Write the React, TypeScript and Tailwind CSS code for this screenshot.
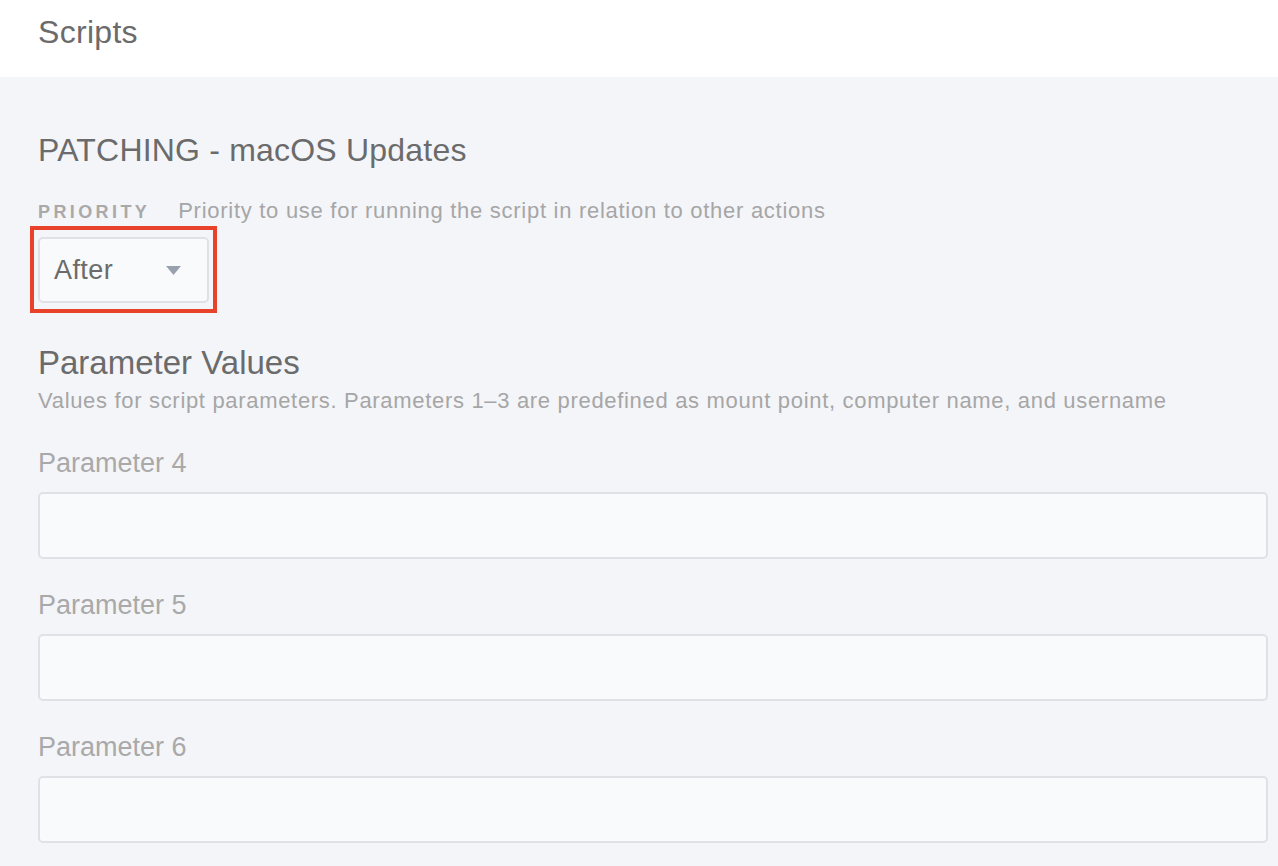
import React from "react";

const font = { fontFamily: '"Liberation Sans", Arial, sans-serif' };

function Param({ n }: { n: number }) {
  return (
    <div className="flex flex-col">
      <div className="text-[27px] leading-[27px] text-[#a9a9a9]">Parameter {n}</div>
      <div className="mt-[15px] h-[67px] w-full rounded-[5px] border-2 border-[#e0e1e7] bg-[#f9fafc]" />
    </div>
  );
}

export default function App() {
  return (
    <div style={font} className="min-h-[866px] w-[1278px] bg-[#f4f5f9]">
      <div className="h-[77px] bg-white pl-[38px] pt-[16px]">
        <div className="text-[32px] leading-[32px] tracking-[0.3px] text-[#6b6b6b]">Scripts</div>
      </div>
      <div className="flex flex-col pl-[38px] pr-[10px] pt-[57px]">
        <div className="text-[32px] leading-[32px] tracking-[0.2px] text-[#6b6b6b]">PATCHING - macOS Updates</div>
        <div className="mt-[33px] flex h-[24px] items-baseline">
          <span className="text-[18px] font-bold tracking-[3.4px] text-[#a9a9a9]">PRIORITY</span>
          <span className="ml-[28px] text-[22px] leading-[24px] tracking-[0.72px] text-[#a6a6a6]">
            Priority to use for running the script in relation to other actions
          </span>
        </div>
        <div className="mt-[14px]">
          <div className="relative inline-block">
            <div className="flex h-[66px] w-[171px] items-center justify-between rounded-[5px] border-2 border-[#e0e1e7] bg-[#f9fafc] pl-[14px] pr-[26px]">
              <span className="text-[27px] tracking-[0.4px] text-[#6b6b6b]">After</span>
              <svg width="15" height="9" viewBox="0 0 15 9">
                <polygon points="0,0 15,0 7.5,9" fill="#9aa1ae" />
              </svg>
            </div>
            <div className="absolute left-[-8px] top-[-11px] right-[-8px] bottom-[-10px] border-4 border-[#e8432a]" />
          </div>
        </div>
        <div className="mt-[43px] text-[33px] leading-[33px] text-[#6b6b6b]">Parameter Values</div>
        <div className="mt-[10px] text-[22px] leading-[24px] tracking-[0.68px] text-[#a6a6a6]">
          Values for script parameters. Parameters 1–3 are predefined as mount point, computer name, and username
        </div>
        <div className="mt-[37px] flex flex-col gap-[33px]">
          <Param n={4} />
          <Param n={5} />
          <Param n={6} />
        </div>
      </div>
    </div>
  );
}
